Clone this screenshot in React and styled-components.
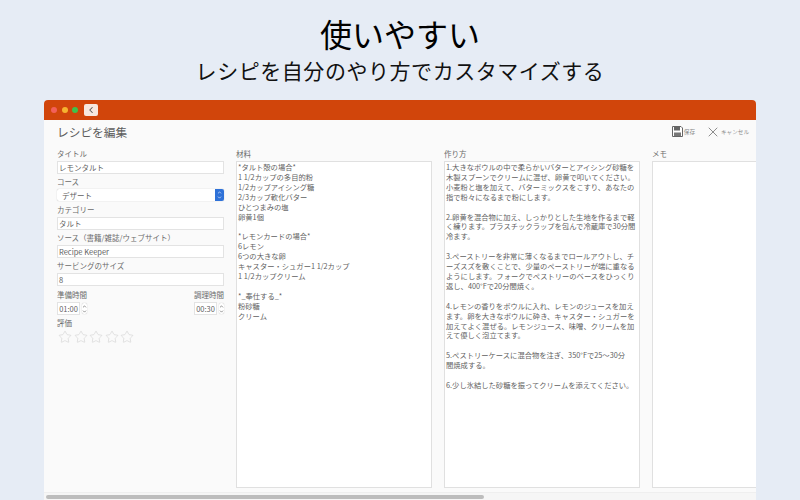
import React from 'react';
import styled, { createGlobalStyle } from 'styled-components';
import { ChevronLeft, ChevronUp, ChevronDown, X, Star } from 'lucide-react';

const ingredients = `*タルト殻の場合*
1 1/2カップの多目的粉
1/2カップアイシング糖
2/3カップ軟化バター
ひとつまみの塩
卵黄1個

*レモンカードの場合*
6レモン
6つの大きな卵
キャスター・シュガー1 1/2カップ
1 1/2カップクリーム

*_奉仕する_*
粉砂糖
クリーム`;

const method = `1.大きなボウルの中で柔らかいバターとアイシング砂糖を
木製スプーンでクリームに混ぜ、卵黄で叩いてください。
小麦粉と塩を加えて、バターミックスをこすり、あなたの
指で粉々になるまで粉にします。

2.卵黄を混合物に加え、しっかりとした生地を作るまで軽
く練ります。プラスチックラップを包んで冷蔵庫で30分間
冷ます。

3.ペーストリーを非常に薄くなるまでロールアウトし、チ
ーズスズを敷くことで、少量のペーストリーが端に重なる
ようにします。フォークでペストリーのベースをひっくり
返し、400°Fで20分間焼く。

4.レモンの香りをボウルに入れ、レモンのジュースを加え
ます。卵を大きなボウルに砕き、キャスター・シュガーを
加えてよく混ぜる。レモンジュース、味噌、クリームを加
えて優しく泡立てます。

5.ペストリーケースに混合物を注ぎ、350°Fで25～30分
間焼成する。

6.少し氷結した砂糖を振ってクリームを添えてください。`;

const GlobalStyle = createGlobalStyle`
  html, body {
    margin: 0;
    padding: 0;
    background: #e6ecf5;
  }
  body {
    font-family: "Noto Sans CJK JP", "Noto Sans", sans-serif;
  }
`;

const Page = styled.div`
  display: flex;
  flex-direction: column;
  align-items: center;
  width: 800px;
  height: 500px;
  overflow: hidden;
  background: #e6ecf5;
`;

const Headline = styled.h1`
  margin: 12px 0 0;
  height: 42px;
  font-size: 32px;
  line-height: 42px;
  font-weight: 400;
  color: #000;
`;

const Subline = styled.h2`
  margin: 2px 0 0;
  height: 28px;
  font-size: 21px;
  line-height: 28px;
  font-weight: 400;
  letter-spacing: 0.55px;
  color: #111;
`;

const Window = styled.div`
  flex: 1;
  display: flex;
  flex-direction: column;
  width: 712px;
  margin-top: 16px;
  overflow: hidden;
  background: #fafafa;
  border-radius: 4px 4px 0 0;
`;

const TitleBar = styled.div`
  display: flex;
  align-items: center;
  gap: 4.5px;
  height: 20px;
  flex-shrink: 0;
  padding-left: 7px;
  background: #d1450b;
`;

const Light = styled.span`
  width: 6px;
  height: 6px;
  border-radius: 50%;
  background: ${(props) => props.color};
`;

const BackButton = styled.div`
  display: flex;
  align-items: center;
  justify-content: center;
  width: 14px;
  height: 12px;
  margin-left: 1px;
  color: #555;
  background: #f7e8e0;
  border-radius: 2px;
`;

const Toolbar = styled.div`
  display: flex;
  align-items: center;
  box-sizing: border-box;
  height: 24px;
  flex-shrink: 0;
  padding: 0 7px 1px 13px;
`;

const Heading = styled.div`
  flex: 1;
  font-size: 11.7px;
  color: #5c5c5c;
`;

const ToolButton = styled.div`
  display: flex;
  align-items: center;
  gap: ${(props) => props.$gap}px;
  margin-left: 10px;
  font-size: 5.6px;
  color: #8a8a8a;
`;

const Columns = styled.div`
  flex: 1;
  min-height: 0;
  display: flex;
  gap: 12px;
  padding: 4px 0 0 13px;
`;

const FormColumn = styled.div`
  display: flex;
  flex-direction: column;
  flex-shrink: 0;
  width: 167px;
`;

const TextColumn = styled.div`
  display: flex;
  flex-direction: column;
  flex-shrink: 0;
  width: 196px;
  height: 340px;
`;

const Label = styled.label`
  display: block;
  height: 13px;
  font-size: 7.5px;
  line-height: 12px;
  color: #6a6a6a;
`;

const Input = styled.div`
  box-sizing: border-box;
  height: 13px;
  margin-bottom: 2px;
  padding-left: 1px;
  font-size: 7.5px;
  line-height: 12px;
  color: #5f5f5f;
  background: #fff;
  border: 1px solid #e3e3e3;
`;

const Select = styled.div`
  display: flex;
  justify-content: space-between;
  align-items: center;
  box-sizing: border-box;
  height: 12px;
  margin-bottom: 3px;
  padding-left: 5px;
  font-size: 7.5px;
  color: #5f5f5f;
  background: #fff;
  border-radius: 2px;
  box-shadow: 0 0 1px #aaa;
`;

const SelectArrow = styled.div`
  display: flex;
  flex-direction: column;
  align-items: center;
  justify-content: center;
  width: 9px;
  height: 12px;
  color: #fff;
  background: #2f72d8;
  border-radius: 0 2px 2px 0;
`;

const TimeRow = styled.div`
  display: flex;
  justify-content: space-between;
  margin: 1px 0 2px;
`;

const TimeGroup = styled.div`
  display: flex;
  flex-direction: column;
  align-items: ${(props) => (props.$end ? 'flex-end' : 'flex-start')};
`;

const TimeField = styled.div`
  display: flex;
  align-items: center;
  gap: 2px;
`;

const TimeValue = styled.div`
  box-sizing: border-box;
  width: 23px;
  height: 13px;
  font-size: 7.5px;
  line-height: 12px;
  text-align: center;
  color: #5f5f5f;
  background: #fff;
  border: 1px solid #e3e3e3;
`;

const Stepper = styled.div`
  display: flex;
  flex-direction: column;
  align-items: center;
  justify-content: center;
  box-sizing: border-box;
  width: 5px;
  height: 11px;
  color: #555;
  background: #fff;
  border-radius: 2px;
  box-shadow: 0 0 1px #aaa;
`;

const Stars = styled.div`
  display: flex;
  gap: 1.5px;
  margin-left: 1px;
`;

const TextBox = styled.div`
  flex: 1;
  box-sizing: border-box;
  padding: 1px 1px 0;
  overflow: hidden;
  font-size: 7.3px;
  line-height: 9.9px;
  white-space: pre;
  color: #5f5f5f;
  background: #fff;
  border: 1px solid #e0e0e0;
`;

const ScrollTrack = styled.div`
  box-sizing: border-box;
  height: 8px;
  flex-shrink: 0;
  display: flex;
  align-items: center;
  padding-left: 2px;
  background: #f6f6f6;
  border-top: 1px solid #efefef;
`;

const ScrollThumb = styled.div`
  width: 438px;
  height: 4px;
  background: #bdbdbd;
  border-radius: 2px;
`;

const SaveIcon = () => (
  <svg width="11" height="11" viewBox="0 0 11 11">
    <path d="M0.5 0.5h8.5l1.5 1.5v8.5h-10z" fill="#fff" stroke="#666" />
    <path d="M2 1h6v3.5H2z" fill="#666" />
    <path d="M2 6.5h7V10H2z" fill="#777" />
  </svg>
);

const Spinner = ({ size }) => (
  <>
    <ChevronUp size={size} strokeWidth={3} />
    <ChevronDown size={size} strokeWidth={3} />
  </>
);

export default function App() {
  return (
    <Page>
      <GlobalStyle />
      <Headline>使いやすい</Headline>
      <Subline>レシピを自分のやり方でカスタマイズする</Subline>
      <Window>
        <TitleBar>
          <Light color="#f2605a" />
          <Light color="#f5b330" />
          <Light color="#3fc24b" />
          <BackButton>
            <ChevronLeft size={10} strokeWidth={2.5} />
          </BackButton>
        </TitleBar>
        <Toolbar>
          <Heading>レシピを編集</Heading>
          <ToolButton $gap={1}>
            <SaveIcon />
            保存
          </ToolButton>
          <ToolButton $gap={0}>
            <X size={16} strokeWidth={1} color="#555" />
            キャンセル
          </ToolButton>
        </Toolbar>
        <Columns>
          <FormColumn>
            <Label>タイトル</Label>
            <Input>レモンタルト</Input>
            <Label>コース</Label>
            <Select>
              デザート
              <SelectArrow>
                <Spinner size={5} />
              </SelectArrow>
            </Select>
            <Label>カテゴリー</Label>
            <Input>タルト</Input>
            <Label>ソース（書籍/雑誌/ウェブサイト）</Label>
            <Input>Recipe Keeper</Input>
            <Label>サービングのサイズ</Label>
            <Input>8</Input>
            <TimeRow>
              <TimeGroup>
                <Label>準備時間</Label>
                <TimeField>
                  <TimeValue>01:00</TimeValue>
                  <Stepper>
                    <Spinner size={5} />
                  </Stepper>
                </TimeField>
              </TimeGroup>
              <TimeGroup $end>
                <Label>調理時間</Label>
                <TimeField>
                  <TimeValue>00:30</TimeValue>
                  <Stepper>
                    <Spinner size={5} />
                  </Stepper>
                </TimeField>
              </TimeGroup>
            </TimeRow>
            <Label>評価</Label>
            <Stars>
              {[1, 2, 3, 4, 5].map((n) => (
                <Star key={n} size={14} strokeWidth={1} color="#cfcfcf" />
              ))}
            </Stars>
          </FormColumn>
          <TextColumn>
            <Label>材料</Label>
            <TextBox>{ingredients}</TextBox>
          </TextColumn>
          <TextColumn>
            <Label>作り方</Label>
            <TextBox>{method}</TextBox>
          </TextColumn>
          <TextColumn>
            <Label>メモ</Label>
            <TextBox />
          </TextColumn>
        </Columns>
        <ScrollTrack>
          <ScrollThumb />
        </ScrollTrack>
      </Window>
    </Page>
  );
}
